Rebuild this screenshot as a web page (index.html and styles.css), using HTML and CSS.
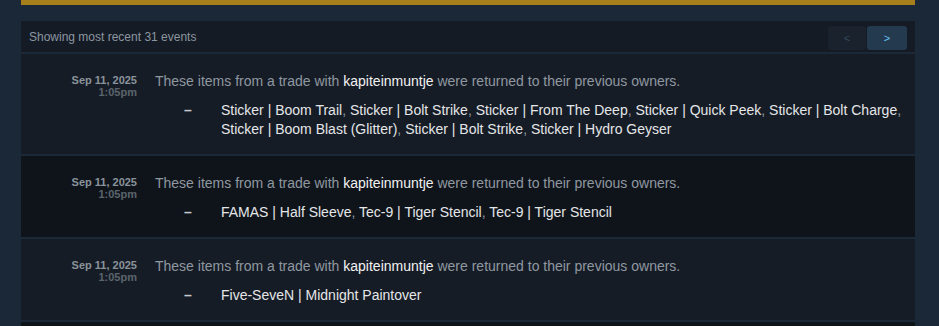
FILE: index.html
```html
<!DOCTYPE html>
<html lang="en">
<head>
  <meta charset="UTF-8" />
  <meta name="viewport" content="width=device-width, initial-scale=1.0"/>
  <title>Inventory History</title>
  <link rel="stylesheet" href="styles.css">
</head>
<body>

<div class="page">
  <div class="notice-bar"></div>

  <div class="history">
    <!-- header -->
    <div class="history-head">
      <span class="count">Showing most recent 31 events</span>
      <div class="pager">
        <button class="page-btn disabled">&lt;</button>
        <button class="page-btn active">&gt;</button>
      </div>
    </div>

    <!-- rows -->
    <div class="row">
      <div class="date">Sep 11, 2025<span class="time">1:05pm</span></div>
      <div class="event">
        <div class="desc">These items from a trade with <a class="user">kapiteinmuntje</a> were returned to their previous owners.</div>
        <div class="items">
          <span class="dash">–</span>
          <div class="item-list">
            <a>Sticker | Boom Trail</a>, <a>Sticker | Bolt Strike</a>, <a>Sticker | From The Deep</a>, <a>Sticker | Quick Peek</a>, <a>Sticker | Bolt Charge</a>, <a>Sticker | Boom Blast (Glitter)</a>, <a>Sticker | Bolt Strike</a>, <a>Sticker | Hydro Geyser</a>
          </div>
        </div>
      </div>
    </div>

    <div class="row alt">
      <div class="date">Sep 11, 2025<span class="time">1:05pm</span></div>
      <div class="event">
        <div class="desc">These items from a trade with <a class="user">kapiteinmuntje</a> were returned to their previous owners.</div>
        <div class="items">
          <span class="dash">–</span>
          <div class="item-list">
            <a>FAMAS | Half Sleeve</a>, <a>Tec-9 | Tiger Stencil</a>, <a>Tec-9 | Tiger Stencil</a>
          </div>
        </div>
      </div>
    </div>

    <div class="row">
      <div class="date">Sep 11, 2025<span class="time">1:05pm</span></div>
      <div class="event">
        <div class="desc">These items from a trade with <a class="user">kapiteinmuntje</a> were returned to their previous owners.</div>
        <div class="items">
          <span class="dash">–</span>
          <div class="item-list">
            <a>Five-SeveN | Midnight Paintover</a>
          </div>
        </div>
      </div>
    </div>

    <!-- next row starts just below the fold -->
    <div class="row alt row-peek"></div>
  </div>
</div>

</body>
</html>
```

FILE: styles.css
```css
:root {
  --page: #1b2838;
  --gold: #a67f1c;
  --head: #151b24;
  --row: #161c26;
  --row-alt: #0f141b;
  --text: #8f98a0;
  --bright: #e4e6e8;
}

* {
  margin: 0;
  padding: 0;
  box-sizing: border-box;
}

body {
  font-family: Arial, 'Liberation Sans', sans-serif;
  background-color: var(--page);
  color: var(--text);
  overflow: hidden;
}

.page {
  width: 894px;
  margin-left: 21px;
}

.notice-bar {
  height: 5px;
  background-color: var(--gold);
  margin-bottom: 16px;
}

.history {
  display: flex;
  flex-direction: column;
  gap: 2px;
}

/* header */
.history-head {
  height: 31px;
  background-color: var(--head);
  display: flex;
  align-items: center;
  justify-content: space-between;
  padding: 0 8px;
}

.count {
  font-size: 12px;
  color: #8b96a1;
}

.pager {
  display: flex;
  gap: 1px;
  margin-top: 2px;
}

.page-btn {
  width: 39px;
  height: 24px;
  border: none;
  border-radius: 3px;
  font-family: Arial, 'Liberation Sans', sans-serif;
  font-size: 11px;
  cursor: pointer;
}

.page-btn.disabled {
  background-color: #19222d;
  color: #34495b;
  width: 38px;
}

.page-btn.active {
  background-color: #243a4e;
  color: #66c0f4;
  width: 40px;
}

/* rows */
.row {
  display: flex;
  background-color: var(--row);
  padding: 17px 10px 15px 0;
}

.row.alt {
  background-color: var(--row-alt);
}

.row-peek {
  height: 60px;
}

.date {
  width: 116px;
  flex-shrink: 0;
  margin-right: 18px;
  margin-top: 3px;
  text-align: right;
  font-size: 11px;
  font-weight: bold;
  line-height: 12px;
  color: #8a939b;
}

.time {
  display: block;
  color: #5b646c;
}

.event {
  flex: 1;
}

.desc {
  font-size: 14px;
  line-height: 20px;
}

.user {
  color: #f2f2f2;
}

.items {
  display: flex;
  margin-top: 10px;
  font-size: 14px;
  line-height: 19px;
}

.dash {
  width: 66px;
  flex-shrink: 0;
  text-align: center;
  color: #c6c9cc;
  font-weight: bold;
}

.item-list a {
  color: var(--bright);
}
```
